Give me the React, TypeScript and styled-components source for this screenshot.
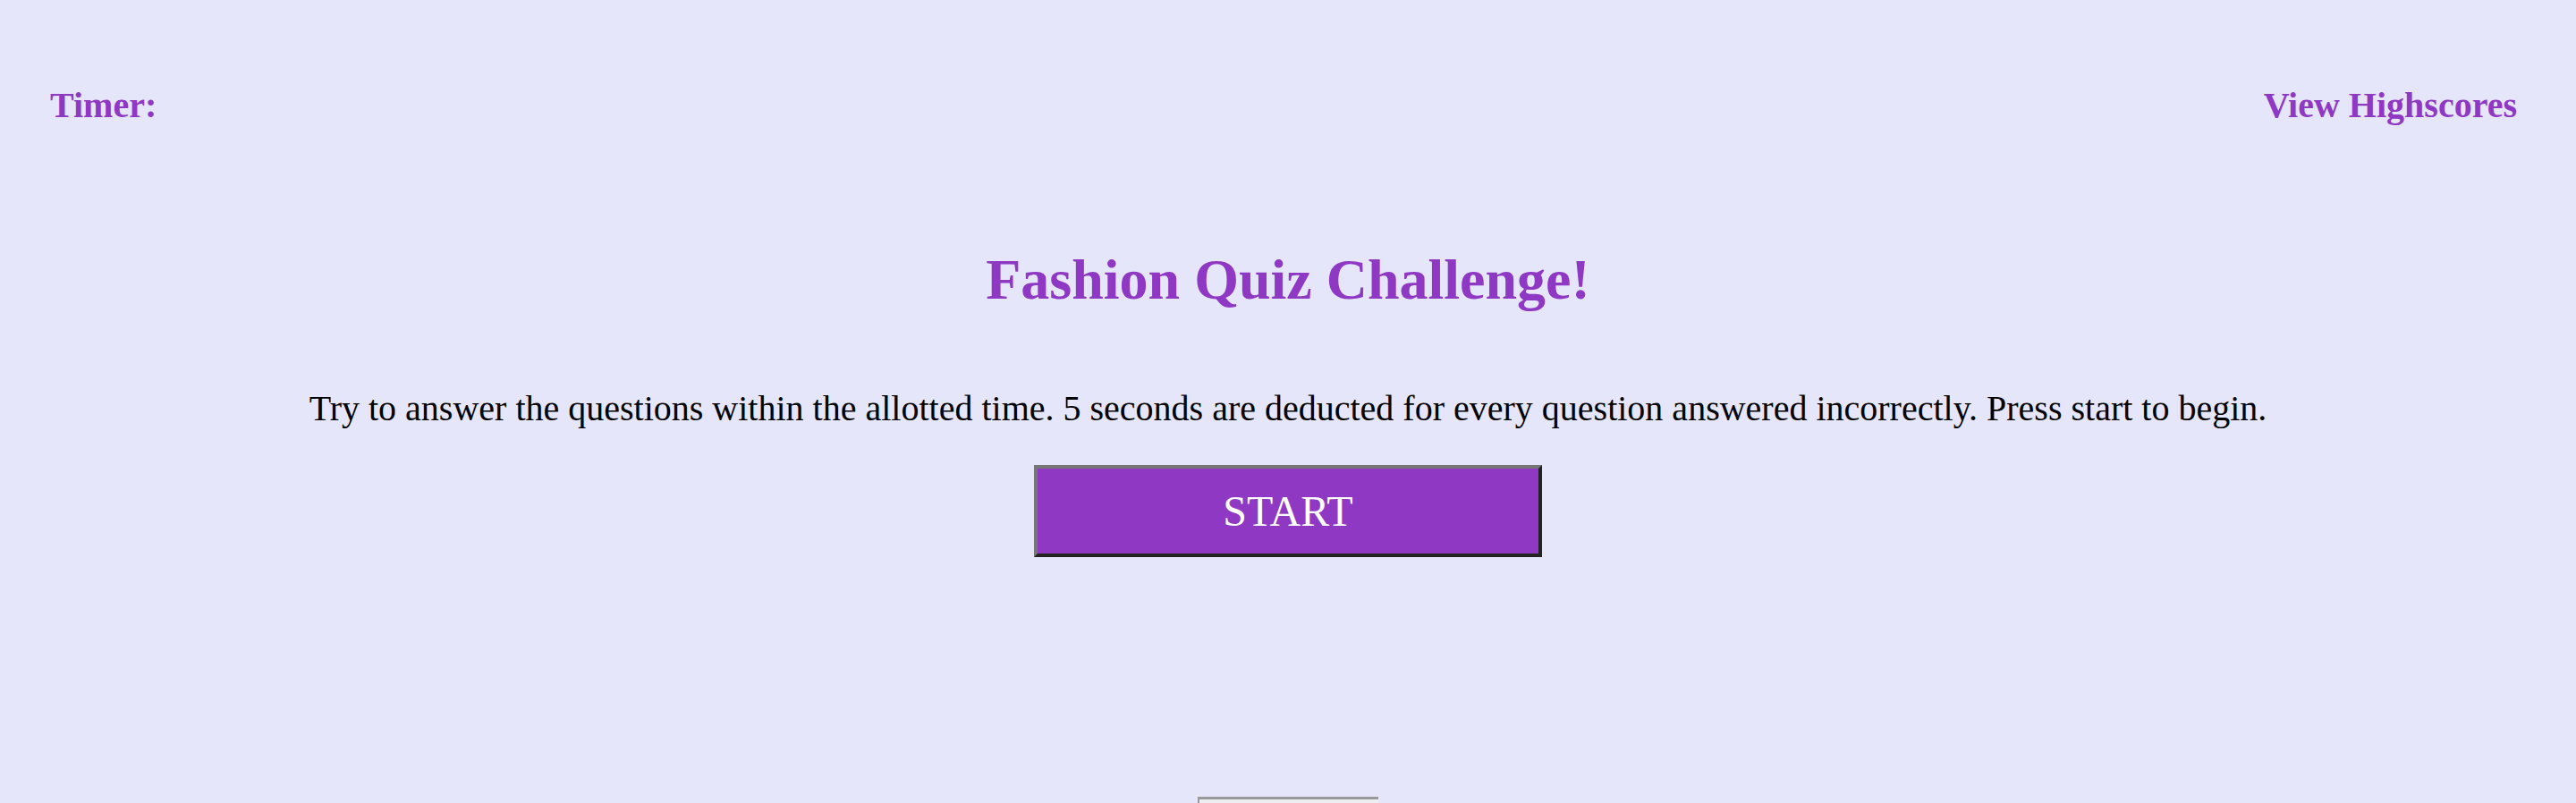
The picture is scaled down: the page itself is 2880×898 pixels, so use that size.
import React from "react";
import styled, { createGlobalStyle } from "styled-components";

const purple = "#8E38C4";

const GlobalStyle = createGlobalStyle`
  html, body {
    margin: 0;
    padding: 0;
    background: #E6E6FA;
    font-family: "Liberation Serif", "Times New Roman", serif;
    overflow: hidden;
  }
`;

const Page = styled.div`
  display: flex;
  flex-direction: column;
  align-items: stretch;
  min-height: 898px;
`;

const Header = styled.header`
  display: flex;
  justify-content: space-between;
  align-items: center;
  padding: 95px 66px 0 56px;
`;

const HeaderText = styled.span`
  font-size: 40px;
  line-height: 46px;
  font-weight: bold;
  color: ${purple};
`;

const Main = styled.main`
  display: flex;
  flex-direction: column;
  align-items: center;
`;

const Title = styled.h1`
  margin: 135px 0 0;
  font-size: 64px;
  line-height: 74px;
  font-weight: bold;
  color: ${purple};
`;

const Intro = styled.p`
  margin: 84px 0 0;
  font-size: 40px;
  line-height: 46px;
  color: #000;
`;

const StartButton = styled.button`
  margin-top: 40px;
  width: 568px;
  height: 103px;
  box-sizing: border-box;
  background: ${purple};
  color: #fff;
  font-family: "Liberation Serif", "Times New Roman", serif;
  font-size: 48px;
  border-width: 4px;
  border-style: solid;
  border-color: #767676 #222 #222 #767676;
  padding: 0;
  cursor: pointer;
`;

const ScoreBox = styled.div`
  margin-top: 268px;
  width: 202px;
  height: 40px;
  box-sizing: border-box;
  border-top: 3px solid #999;
  border-left: 2px solid #999;
  background: #EEEEF2;
`;

export default function App() {
  return (
    <>
      <GlobalStyle />
      <Page>
        <Header>
          <HeaderText>Timer:</HeaderText>
          <HeaderText>View Highscores</HeaderText>
        </Header>
        <Main>
          <Title>Fashion Quiz Challenge!</Title>
          <Intro>
            Try to answer the questions within the allotted time. 5 seconds are deducted for every question answered incorrectly. Press start to begin.
          </Intro>
          <StartButton>START</StartButton>
          <ScoreBox />
        </Main>
      </Page>
    </>
  );
}
